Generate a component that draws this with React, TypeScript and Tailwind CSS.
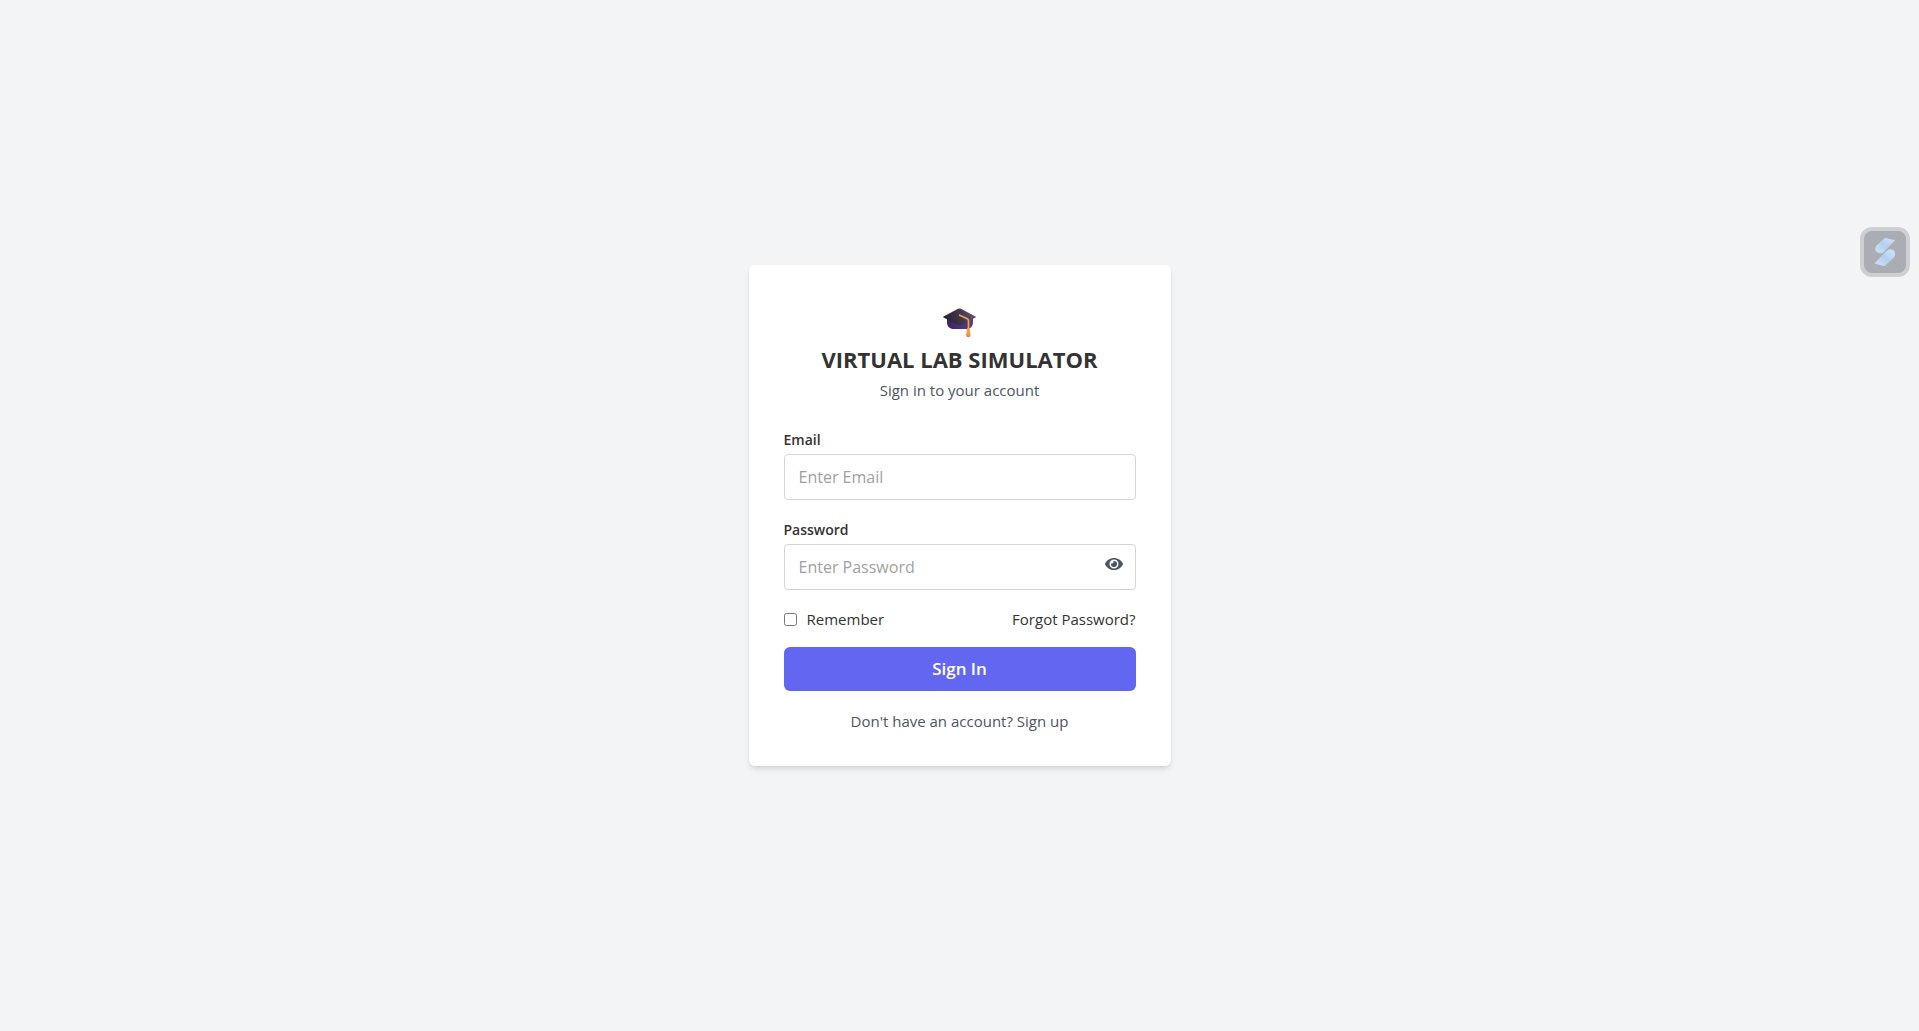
import { useState } from "react";

function GraduationCap() {
  return (
    <svg viewBox="0 0 33 30" className="h-[30px] w-[33px]" aria-hidden="true">
      <defs>
        <linearGradient id="board" x1="0" y1="0.6" x2="1" y2="0.4">
          <stop offset="0" stopColor="#29212f" />
          <stop offset="0.55" stopColor="#42364b" />
          <stop offset="1" stopColor="#6b5678" />
        </linearGradient>
        <linearGradient id="base" x1="0" y1="0" x2="1" y2="0">
          <stop offset="0" stopColor="#3b2660" />
          <stop offset="0.5" stopColor="#4b3180" />
          <stop offset="1" stopColor="#59407a" />
        </linearGradient>
        <linearGradient id="tassel" x1="0" y1="0" x2="0" y2="1">
          <stop offset="0" stopColor="#f3a436" />
          <stop offset="0.6" stopColor="#f99a50" />
          <stop offset="1" stopColor="#f0716b" />
        </linearGradient>
      </defs>
      <path d="M4 10h26v4c0 4.500-2.500 7-7 7H11c-4.500 0-7-2.500-7-7z" fill="url(#base)" />
      <path d="M0.500 8.500 15 0.800q1.500-0.700 3 0l14.500 7.700q0.700 0.500 0 1L18 17q-1.500 0.700-3 0L0.500 9.500q-0.600-0.500 0-1z" fill="url(#board)" />
      <path d="M16.700 7.200 24.200 10.800q1.300 0.700 1.300 2V22" fill="none" stroke="#eba541" strokeWidth="1.700" strokeLinecap="round" />
      <path d="M24.300 20h2.200l1.100 7q0 2.300-2.200 2.300T23 27z" fill="url(#tassel)" />
    </svg>
  );
}

function EyeIcon() {
  return (
    <svg viewBox="0 0 576 512" className="h-4 w-[18px]" fill="currentColor" aria-hidden="true">
      <path d="M572.52 241.400C518.290 135.590 410.930 64 288 64S57.680 135.640 3.480 241.410a32.350 32.350 0 0 0 0 29.190C57.710 376.410 165.070 448 288 448s230.320-71.640 284.520-177.410a32.350 32.350 0 0 0 0-29.190zM288 400a144 144 0 1 1 144-144 143.930 143.930 0 0 1-144 144zm0-240a95.310 95.310 0 0 0-25.310 3.790 47.850 47.850 0 0 1-66.900 66.900A95.780 95.780 0 1 0 288 160z" />
    </svg>
  );
}

function FloatingWidget() {
  return (
    <button
      type="button"
      aria-label="Open assistant"
      className="fixed top-[227px] right-[9px] flex size-[50px] items-center justify-center rounded-xl border-4 border-[#cecfd3] bg-[#abadb4]"
    >
      <svg viewBox="0 0 22 30" className="h-[30px] w-[22px]" aria-hidden="true">
        <defs>
          <linearGradient id="ribbon" x1="0" y1="1" x2="1" y2="0">
            <stop offset="0" stopColor="#cfe3f8" />
            <stop offset="0.5" stopColor="#b4d0ef" />
            <stop offset="1" stopColor="#d4e4f4" />
          </linearGradient>
        </defs>
        <path d="M12 1 21 3.200 8.500 16.200Q5 16.500 2.800 15 1 13.500 1.200 11.500 1.300 9.500 3 8L10 1.800Q11 1 12 1z" fill="url(#ribbon)" />
        <path d="M0.500 26.500 12.500 13.800Q15.500 11.500 19 12.800 21.500 14.500 21 18 20.700 20 19.500 21L11 28.700Q10.300 29.200 9.300 29z" fill="url(#ribbon)" />
      </svg>
    </button>
  );
}

const fieldClass =
  "h-[46px] w-full rounded-[4px] border border-[#d1d5db] bg-white px-3.5 text-base text-[#333] placeholder:text-[#9f9f9f] focus:outline-none focus:border-[#6366f1]";

const labelClass = "mb-1 block text-sm leading-5 font-semibold";

export default function App() {
  const [visible, setVisible] = useState(false);

  return (
    <div className="flex min-h-screen items-center justify-center bg-[#f3f4f6] font-['Open_Sans','Segoe_UI',sans-serif] text-[15px] leading-5 text-[#333]">
      <main className="w-full max-w-[422px] rounded-md bg-white p-[35px] shadow-md">
        <header className="flex flex-col items-center pt-2 text-center">
          <GraduationCap />
          <h1 className="mt-[5px] text-[22px] leading-8 font-bold">VIRTUAL LAB SIMULATOR</h1>
          <p className="mt-[5px] text-[#4b5563]">Sign in to your account</p>
        </header>

        <form className="mt-[30px]" onSubmit={(e) => e.preventDefault()}>
          <label htmlFor="email" className={labelClass}>
            Email
          </label>
          <input id="email" type="email" placeholder="Enter Email" className={fieldClass} />

          <div className="mt-5">
            <label htmlFor="password" className={labelClass}>
              Password
            </label>
            <div className="relative">
              <input
                id="password"
                type={visible ? "text" : "password"}
                placeholder="Enter Password"
                className={fieldClass}
              />
              <button
                type="button"
                aria-label={visible ? "Hide password" : "Show password"}
                onClick={() => setVisible(!visible)}
                className="absolute top-3 right-[13px] text-[#4b5563]"
              >
                <EyeIcon />
              </button>
            </div>
          </div>

          <div className="mt-[19px] flex items-center justify-between">
            <label className="flex items-center gap-2.5">
              <input type="checkbox" className="size-[13px]" />
              Remember
            </label>
            <a href="#forgot">Forgot Password?</a>
          </div>

          <button
            type="submit"
            className="mt-[18px] h-11 w-full rounded-md bg-[#6366f1] text-[17px] font-semibold text-white"
          >
            Sign In
          </button>
        </form>

        <p className="mt-5 text-center text-[#4b5563]">
          Don't have an account? <a href="#signup">Sign up</a>
        </p>
      </main>
      <FloatingWidget />
    </div>
  );
}
